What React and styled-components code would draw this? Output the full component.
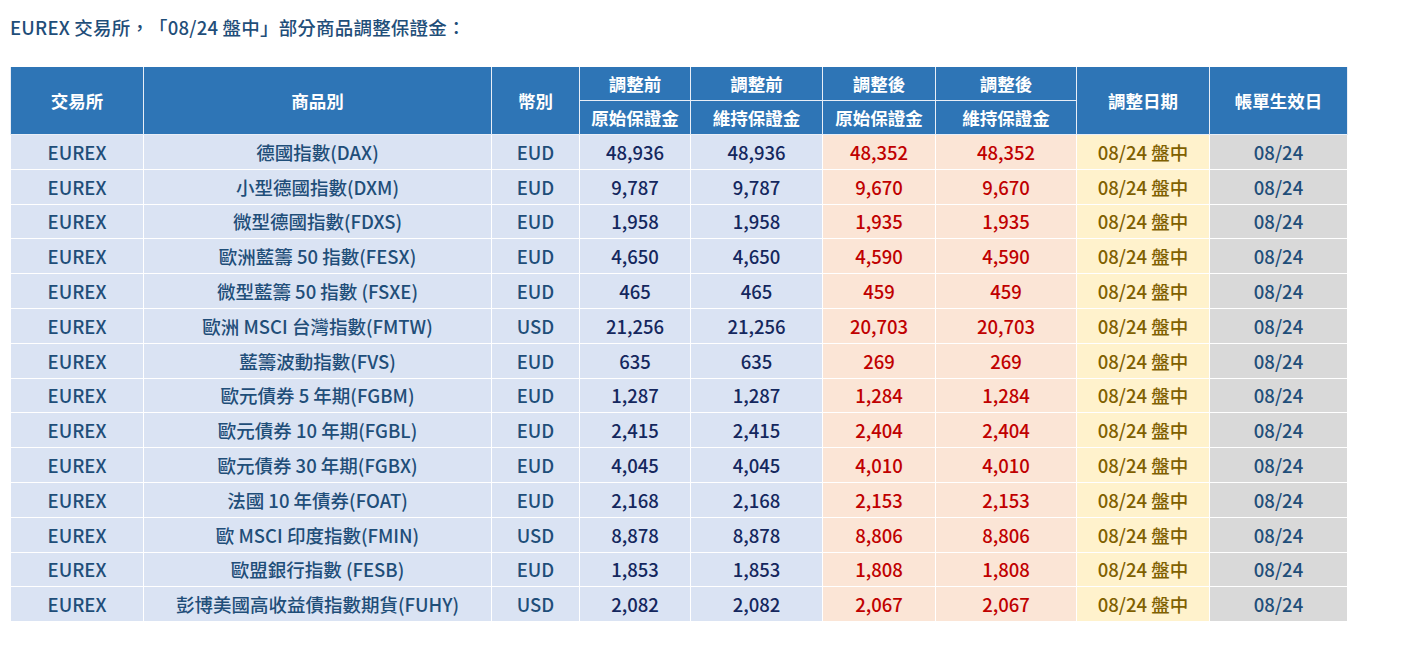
import React from 'react'
import styled, { createGlobalStyle } from 'styled-components'

const GlobalStyle = createGlobalStyle`
    html, body {
        margin: 0;
        padding: 0;
        background: #ffffff;
    }
    body {
        font-family: "Noto Sans CJK TC", "Noto Sans", sans-serif;
        text-spacing-trim: space-all;
    }
`

const Page = styled.div`
    padding: 14px 10px 20px 10px;
`

const Title = styled.h2`
    margin: 0 0 27px 0;
    font-size: 18.5px;
    font-weight: 500;
    line-height: 26px;
    letter-spacing: 0.2px;
    color: #1f4e79;
`

const Table = styled.table`
    border-collapse: collapse;
    table-layout: fixed;
    width: 1337px;
`

const HeadCell = styled.th`
    background: #2e75b6;
    color: #ffffff;
    font-size: 17.5px;
    font-weight: 700;
    text-align: center;
    vertical-align: middle;
    border: 1px solid #e8eef7;
    border-top: none;
    padding: 0;
    height: ${p => p.$half ? '33px' : '66px'};
    line-height: 33px;
`

const tones = {
    base: { bg: '#dae3f3', color: '#1f4e79' },
    before: { bg: '#dae3f3', color: '#14275e' },
    after: { bg: '#fbe5d6', color: '#c00000' },
    date: { bg: '#fff2cc', color: '#7f6000' },
    bill: { bg: '#d9d9d9', color: '#1f4e79' },
}

const Cell = styled.td`
    background: ${p => tones[p.$tone].bg};
    color: ${p => tones[p.$tone].color};
    font-size: 18.5px;
    font-weight: 500;
    text-align: center;
    vertical-align: middle;
    height: 33.8px;
    padding: 0;
    border: 1px solid #ffffff;
    white-space: nowrap;
`

const columns = [133, 348, 88, 111, 132, 113, 141, 133, 138]

const rows = [
    ['德國指數(DAX)', 'EUD', '48,936', '48,352'],
    ['小型德國指數(DXM)', 'EUD', '9,787', '9,670'],
    ['微型德國指數(FDXS)', 'EUD', '1,958', '1,935'],
    ['歐洲藍籌 50 指數(FESX)', 'EUD', '4,650', '4,590'],
    ['微型藍籌 50 指數 (FSXE)', 'EUD', '465', '459'],
    ['歐洲 MSCI 台灣指數(FMTW)', 'USD', '21,256', '20,703'],
    ['藍籌波動指數(FVS)', 'EUD', '635', '269'],
    ['歐元債券 5 年期(FGBM)', 'EUD', '1,287', '1,284'],
    ['歐元債券 10 年期(FGBL)', 'EUD', '2,415', '2,404'],
    ['歐元債券 30 年期(FGBX)', 'EUD', '4,045', '4,010'],
    ['法國 10 年債券(FOAT)', 'EUD', '2,168', '2,153'],
    ['歐 MSCI 印度指數(FMIN)', 'USD', '8,878', '8,806'],
    ['歐盟銀行指數 (FESB)', 'EUD', '1,853', '1,808'],
    ['彭博美國高收益債指數期貨(FUHY)', 'USD', '2,082', '2,067'],
]

function App() {
    return (
        <Page lang="zh-Hant-TW">
            <GlobalStyle />
            <Title>EUREX 交易所，「08/24 盤中」部分商品調整保證金：</Title>

            <Table>
                <colgroup>
                    {columns.map((w, i) => <col key={i} style={{ width: w }} />)}
                </colgroup>
                <thead>
                    <tr>
                        <HeadCell rowSpan={2}>交易所</HeadCell>
                        <HeadCell rowSpan={2}>商品別</HeadCell>
                        <HeadCell rowSpan={2}>幣別</HeadCell>
                        <HeadCell $half>調整前</HeadCell>
                        <HeadCell $half>調整前</HeadCell>
                        <HeadCell $half>調整後</HeadCell>
                        <HeadCell $half>調整後</HeadCell>
                        <HeadCell rowSpan={2}>調整日期</HeadCell>
                        <HeadCell rowSpan={2}>帳單生效日</HeadCell>
                    </tr>
                    <tr>
                        <HeadCell $half>原始保證金</HeadCell>
                        <HeadCell $half>維持保證金</HeadCell>
                        <HeadCell $half>原始保證金</HeadCell>
                        <HeadCell $half>維持保證金</HeadCell>
                    </tr>
                </thead>
                <tbody>
                    {rows.map(([name, cur, before, after]) => (
                        <tr key={name}>
                            <Cell $tone="base">EUREX</Cell>
                            <Cell $tone="base">{name}</Cell>
                            <Cell $tone="base">{cur}</Cell>
                            <Cell $tone="before">{before}</Cell>
                            <Cell $tone="before">{before}</Cell>
                            <Cell $tone="after">{after}</Cell>
                            <Cell $tone="after">{after}</Cell>
                            <Cell $tone="date">08/24 盤中</Cell>
                            <Cell $tone="bill">08/24</Cell>
                        </tr>
                    ))}
                </tbody>
            </Table>
        </Page>
    )
}

export default App
